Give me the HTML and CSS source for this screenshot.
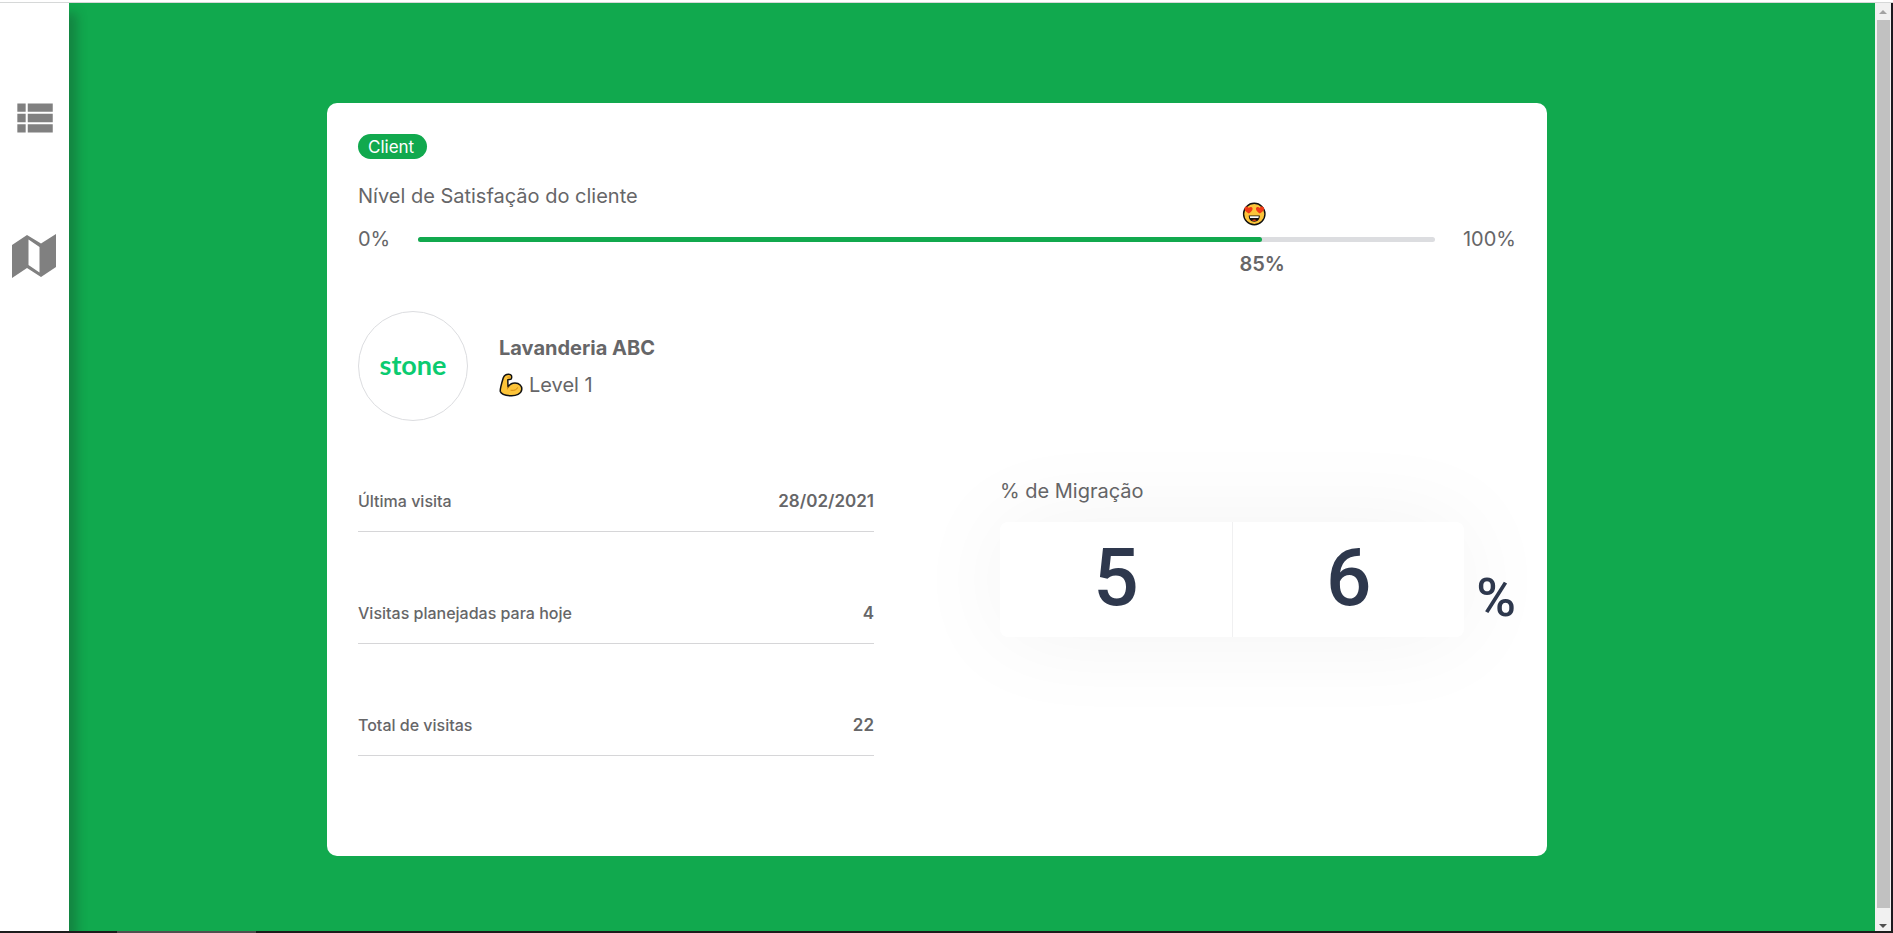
FILE: index.html
```html
<!DOCTYPE html>
<html lang="pt-BR">
<head>
<meta charset="utf-8">
<title>Lavanderia ABC</title>
<link rel="stylesheet" href="styles.css">
</head>
<body>
<div class="topline"></div>
<div class="viewport">
  <nav class="sidebar">
    <a class="nav-link" href="#lista" aria-label="Lista">
      <svg class="icon-list" viewBox="0 0 24 24"><path d="M4 14h4v-4H4v4zm0 5h4v-4H4v4zM4 9h4V5H4v4zm5 5h12v-4H9v4zm0 5h12v-4H9v4zM9 5v4h12V5H9z"/></svg>
    </a>
    <a class="nav-link" href="#mapa" aria-label="Mapa">
      <svg class="icon-map" viewBox="0 0 44 44"><path fill-rule="evenodd" d="M0 11 15 1 29 9.500 44 0V33L29 43 15 34 0 44ZM16.500 5.500V31L27.500 38.500V13Z"/></svg>
    </a>
  </nav>
  <main class="page">
    <article class="card">
      <span class="badge">Client</span>
      <h2 class="label satisfaction-title">Nível de Satisfação do cliente</h2>
      <div class="satisfaction">
        <span>0%</span>
        <div class="track">
          <div class="fill" style="width:83%"></div>
          <div class="marker" style="left:83%">
            <svg class="emoji" viewBox="0 0 24 24">
              <circle cx="12" cy="12" r="10.700" fill="#fcc43a" stroke="#111" stroke-width="1.400"/>
              <path d="M6.500 11.500C3 9.500 1.500 7.500 2.500 5.600 3.500 4 5.500 4.400 6.400 6 7.600 4.500 10 4.500 10.300 6.500 10.500 8.600 8.500 10 6.500 11.500ZM17.500 11.500C21 9.500 22.500 7.500 21.500 5.600 20.500 4 18.500 4.400 17.600 6 16.400 4.500 14 4.500 13.700 6.500 13.500 8.600 15.500 10 17.500 11.500Z" fill="#f03a17"/>
              <path d="M6.500 13.500H17.500C17.500 17.500 15.500 19.700 12 19.700S6.500 17.500 6.500 13.500Z" fill="#111"/>
              <path d="M7.500 14.200H16.500L16.200 16H7.800Z" fill="#fff"/>
              <path d="M9.500 18.300Q12 16.800 14.500 18.300 12 19.800 9.500 18.300Z" fill="#f03a17"/>
            </svg>
            <strong class="marker-value">85%</strong>
          </div>
        </div>
        <span>100%</span>
      </div>

      <header class="client">
        <div class="avatar"><span class="brand">stone</span></div>
        <div>
          <h1 class="client-name">Lavanderia ABC</h1>
          <p class="client-level">
            <svg class="emoji" viewBox="0 0 24 24"><path d="M6.300 2.200C8 .800 11.500.700 12.300 2.300 13 4 12.700 6 11.500 6.400 10.500 6.700 9.300 6.200 8.800 6.800L9 14C10.500 11.500 12.800 10 16 10 20.500 10 23 13 22.800 16.300 22.500 21 17 23 11.500 22.700 6.500 22.400 2 20.800 1.300 18.500.800 16.500 3 9 4.200 5 4.700 3.800 5.200 3 6.300 2.200Z" fill="#fcc43a" stroke="#111" stroke-width="1.500" stroke-linejoin="round"/><path d="M9 14 8.500 16M12 17.300Q17.500 18 18.500 14.800M8.800 4.200 11 4" fill="none" stroke="#d88b13" stroke-width="1" stroke-linecap="round"/></svg>
            Level 1
          </p>
        </div>
      </header>

      <div class="details">
        <dl class="stats">
          <div class="stat"><dt>Última visita</dt><dd>28/02/2021</dd></div>
          <div class="stat"><dt>Visitas planejadas para hoje</dt><dd>4</dd></div>
          <div class="stat"><dt>Total de visitas</dt><dd>22</dd></div>
        </dl>
        <section class="migration">
          <h2 class="label">% de Migração</h2>
          <div class="counter">
            <div class="digits"><span class="digit">5</span><span class="digit">6</span></div>
            <span class="unit">%</span>
          </div>
        </section>
      </div>
    </article>
  </main>
  <div class="scrollbar">
    <svg class="arrow arrow-up" viewBox="0 0 8 4"><path d="M0 4 4 0 8 4Z"/></svg>
    <div class="thumb"></div>
    <svg class="arrow" viewBox="0 0 8 4"><path d="M0 0 4 4 8 0Z"/></svg>
  </div>
</div>
<div class="taskbar"><div class="task"></div></div>
</body>
</html>
```
FILE: styles.css
```css
* { box-sizing: border-box; }
body {
  margin: 0;
  height: 100vh;
  display: flex;
  flex-direction: column;
  overflow: hidden;
  font-family: Inter, Roboto, sans-serif;
  font-size: 20px;
  line-height: 24px;
  color: #666668;
  background: #fff;
}
h1, h2, p, dl, dd { margin: 0; }
.topline { flex: none; height: 3px; border-bottom: 1px solid #d6d8d8; background: #fff; }
.viewport {
  flex: 1;
  min-height: 0;
  display: grid;
  grid-template-columns: 69px 1fr 16px;
  grid-template-rows: minmax(0, 1fr);
  border-right: 2px solid #1c1a20;
  overflow: hidden;
}
.sidebar {
  grid-area: 1 / 1;
  z-index: 1;
  display: flex;
  flex-direction: column;
  align-items: center;
  gap: 91px;
  padding: 90px 2px 0 0;
  background: #fff;
  box-shadow: 8px 10px 10px rgba(25, 55, 40, 0.32);
}
.nav-link { display: block; fill: #808080; }
.nav-link svg { display: block; }
.icon-list { width: 50px; height: 50px; }
.icon-map { width: 44px; height: 44px; }
.page {
  grid-area: 1 / 1 / 2 / 3;
  padding: 100px 33px 0 32px;
  background: #11a94e;
  overflow: hidden;
}
.card {
  max-width: 1220px;
  margin: 0 auto;
  padding: 31px 31px 100px;
  border-radius: 10px;
  background: #fff;
}
.badge {
  display: block;
  width: fit-content;
  padding: 1px 13px 0 10px;
  border-radius: 13px;
  background: #11a94e;
  color: #fff;
  font-size: 17px;
  line-height: 24px;
}
.label { font-size: 20px; font-weight: 400; line-height: 24px; }
.satisfaction-title { margin-top: 25px; }
.satisfaction { display: flex; align-items: center; gap: 28px; margin-top: 19px; }
.track { position: relative; flex: 1; height: 5px; border-radius: 3px; background: #dcdde0; }
.fill { height: 100%; border-radius: 3px; background: #11a94e; }
.marker { position: absolute; top: -35px; transform: translateX(-50%); }
.emoji { display: block; width: 24px; height: 24px; }
.marker .emoji { margin-left: 3px; }
.marker-value { display: block; margin-top: 26px; font-weight: 600; }
.client { display: flex; align-items: center; gap: 31px; margin-top: 60px; }
.avatar {
  width: 110px;
  height: 110px;
  display: grid;
  place-items: center;
  border: 1px solid #dcdde0;
  border-radius: 50%;
}
.brand { font-family: Lato, sans-serif; font-size: 27px; font-weight: 700; line-height: 36px; padding-bottom: 3px; color: #0bcb70; }
.client-name { font-size: 20px; font-weight: 700; line-height: 24px; }
.client-level { display: flex; align-items: center; gap: 6px; margin-top: 13px; }
.details { display: grid; grid-template-columns: 1fr 1fr; gap: 126px; }
.stat {
  display: flex;
  justify-content: space-between;
  padding: 69px 0 18px;
  border-bottom: 1px solid #d6d6d8;
  font-size: 16px;
  font-weight: 500;
}
.stat:first-child { padding-top: 68px; }
.stat dd { font-size: 17px; font-weight: 600; }
.migration { padding-top: 58px; }
.counter {
  display: flex;
  align-items: flex-end;
  gap: 12px;
  margin-top: 19px;
  font-family: Roboto, sans-serif;
  font-weight: 500;
  color: #2e384d;
}
.digits {
  flex: 1;
  display: grid;
  grid-template-columns: 1fr 1fr;
  border-radius: 8px;
  background: #fff;
  box-shadow: 0 0 100px rgba(0, 0, 0, 0.05);
}
.digit { padding-top: 1px; padding-bottom: 4px; text-align: center; font-size: 80px; line-height: 110px; }
.digit + .digit { border-left: 1px solid #f0f0f1; }
.unit { padding-bottom: 9px; font-size: 54px; font-weight: 500; line-height: 60px; }
.scrollbar {
  grid-area: 1 / 3;
  display: flex;
  flex-direction: column;
  align-items: center;
  gap: 6px;
  padding: 7px 0 3px;
  background: #f1f1f1;
}
.arrow { width: 8px; height: 4px; fill: #505050; }
.arrow-up { fill: #a3a3a3; }
.thumb { flex: 1; width: 13px; margin-bottom: 10px; background: #c1c1c1; }
.taskbar { flex: none; height: 2px; padding-left: 117px; background: #1c1c1c; }
.task { width: 139px; height: 2px; background: #4f4f4f; }
```
